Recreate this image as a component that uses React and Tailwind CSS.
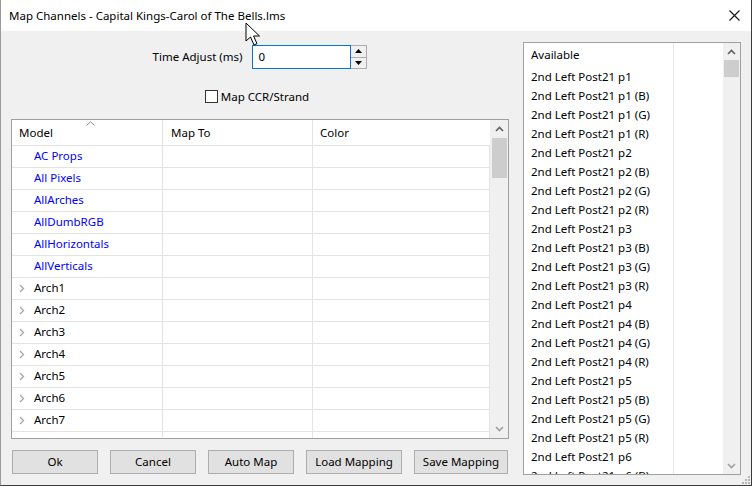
import React from "react";

const F = { fontFamily: '"Noto Sans", "Liberation Sans", sans-serif' };

const blueRows = ["AC Props", "All Pixels", "AllArches", "AllDumbRGB", "AllHorizontals", "AllVerticals"];
const archRows = ["Arch1", "Arch2", "Arch3", "Arch4", "Arch5", "Arch6", "Arch7"];

const avail = [];
for (let i = 1; i <= 6; i++) {
  avail.push(`2nd Left Post21 p${i}`);
  avail.push(`2nd Left Post21 p${i} (B)`);
  avail.push(`2nd Left Post21 p${i} (G)`);
  avail.push(`2nd Left Post21 p${i} (R)`);
}

function Chevron() {
  return (
    <svg width="6" height="9" viewBox="0 0 6 9" className="shrink-0">
      <path d="M1 1 L4.5 4.5 L1 8" fill="none" stroke="#a6a6a6" strokeWidth="1.3" />
    </svg>
  );
}

function UpArrow() {
  return (
    <svg width="9" height="6" viewBox="0 0 9 6">
      <path d="M1 5 L4.5 1.5 L8 5" fill="none" stroke="#606060" strokeWidth="1.6" />
    </svg>
  );
}
function DownArrow() {
  return (
    <svg width="9" height="6" viewBox="0 0 9 6">
      <path d="M1 1 L4.5 4.5 L8 1" fill="none" stroke="#a0a0a0" strokeWidth="1.6" />
    </svg>
  );
}

function Row({ children, blue, chevron }) {
  return (
    <div className="flex h-[22px] shrink-0 border-b border-[#e3e3e3]">
      <div className="w-[151px] border-r border-[#e3e3e3] flex items-center pl-[7px] pb-[2px]">
        <div className="w-[15px] flex items-center pt-[1px]">{chevron ? <Chevron /> : null}</div>
        <span className={blue ? "text-[#0000ff]" : "text-black"}>{children}</span>
      </div>
      <div className="w-[150px] border-r border-[#e3e3e3]" />
      <div className="w-[177px] border-r border-[#e3e3e3]" />
    </div>
  );
}

export default function App() {
  return (
    <div
      className="relative w-[752px] h-[486px] overflow-hidden bg-[#f0f0f0] border-l border-l-[#9a9a9a] border-r border-r-[#3c3c3c] border-b border-b-[#3c3c3c] text-[11.5px] text-black flex flex-col"
      style={F}
    >
      {/* Title bar */}
      <div className="h-[31px] shrink-0 bg-white flex items-center justify-between pl-[8px] pr-[11px]">
        <span className="leading-none">Map Channels - Capital Kings-Carol of The Bells.lms</span>
        <svg width="11" height="11" viewBox="0 0 11 11">
          <path d="M0.5 0.5 L10.5 10.5 M10.5 0.5 L0.5 10.5" stroke="#111" strokeWidth="1.1" />
        </svg>
      </div>

      {/* Body */}
      <div className="flex-1 flex pl-[10px]">
        {/* Left column */}
        <div className="w-[498px] flex flex-col">
          <div className="mt-[14px] h-[24px] flex items-center justify-center pr-0">
            <span className="mr-[10px]">Time Adjust (ms)</span>
            <div className="w-[99px] h-[24px] border border-[#0078d7] bg-white flex items-center pl-[5px]">0</div>
            <div className="w-[16px] h-[24px] border border-[#adadad] border-l-0 flex flex-col bg-[#f0f0f0]">
              <div className="flex-1 flex items-center justify-center border-b border-[#adadad]">
                <svg width="7" height="4" viewBox="0 0 7 4"><path d="M0 4 L3.5 0 L7 4Z" fill="#000" /></svg>
              </div>
              <div className="flex-1 flex items-center justify-center">
                <svg width="7" height="4" viewBox="0 0 7 4"><path d="M0 0 L3.5 4 L7 0Z" fill="#000" /></svg>
              </div>
            </div>
          </div>

          <div className="mt-[21px] h-[13px] flex items-center justify-center pr-[6px]">
            <div className="w-[13px] h-[13px] border border-[#333] bg-white mr-[3px]" />
            <span>Map CCR/Strand</span>
          </div>

          {/* Grid */}
          <div className="mt-[16px] h-[320px] border border-[#a0a0a0] bg-white flex overflow-hidden">
            <div className="w-[478px] flex flex-col overflow-hidden">
              <div className="relative h-[26px] shrink-0 flex border-b border-[#e3e3e3]">
                <div className="w-[151px] border-r border-[#e3e3e3] flex items-center pl-[7px]">Model</div>
                <div className="w-[150px] border-r border-[#e3e3e3] flex items-center pl-[8px]">Map To</div>
                <div className="w-[177px] flex items-center pl-[7px]">Color</div>
                <svg className="absolute left-[74px] top-[1px]" width="9" height="5" viewBox="0 0 9 5">
                  <path d="M0.5 4.5 L4.5 0.8 L8.5 4.5" fill="none" stroke="#8a8a8a" strokeWidth="1" />
                </svg>
              </div>
              {blueRows.map((r) => (
                <Row key={r} blue>
                  {r}
                </Row>
              ))}
              {archRows.map((r) => (
                <Row key={r} chevron>
                  {r}
                </Row>
              ))}
              <Row />
            </div>
            {/* scrollbar */}
            <div className="w-[18px] bg-[#f0f0f0] flex flex-col items-center pl-[1px]">
              <div className="h-[18px] flex items-center justify-center">
                <UpArrow />
              </div>
              <div className="w-[15px] h-[40px] bg-[#cdcdcd]" />
              <div className="flex-1" />
              <div className="h-[18px] flex items-center justify-center">
                <DownArrow />
              </div>
            </div>
          </div>

          {/* Buttons */}
          <div className="mt-[11px] flex gap-[12px] pl-[1px]">
            {[
              ["Ok", "w-[86px]"],
              ["Cancel", "w-[86px]"],
              ["Auto Map", "w-[86px]"],
              ["Load Mapping", "w-[96px]"],
              ["Save Mapping", "w-[94px]"],
            ].map(([t, w]) => (
              <div
                key={t}
                className={`${w} h-[24px] bg-[#e1e1e1] border border-[#adadad] flex items-center justify-center`}
              >
                {t}
              </div>
            ))}
          </div>
        </div>

        {/* Right list */}
        <div className="ml-[14px] mt-[11px] w-[218px] h-[433px] border border-[#a0a0a0] bg-white flex overflow-hidden">
          <div className="w-[150px] border-r border-[#e3eaf2] flex flex-col overflow-hidden">
            <div className="h-[24px] shrink-0 flex items-center pl-[7px]">Available</div>
            {avail.map((a) => (
              <div key={a} className="h-[19px] shrink-0 flex items-center pl-[7px]">
                {a}
              </div>
            ))}
          </div>
          <div className="flex-1" />
          <div className="w-[17px] bg-[#f0f0f0] flex flex-col items-center">
            <div className="h-[17px] flex items-center justify-center">
              <UpArrow />
            </div>
            <div className="w-[15px] h-[17px] bg-[#cdcdcd]" />
            <div className="flex-1" />
            <div className="h-[17px] flex items-center justify-center">
              <DownArrow />
            </div>
          </div>
        </div>
      </div>

      {/* resize grip */}
      <svg className="absolute right-[1px] bottom-[1px]" width="10" height="10" viewBox="0 0 10 10">
        {[[8, 0], [8, 3], [8, 6], [5, 3], [5, 6], [2, 6]].map(([x, y], i) => (
          <rect key={i} x={x} y={y + 2} width="2" height="2" fill="#b8b8b8" />
        ))}
      </svg>

      {/* mouse cursor */}
      <svg className="absolute left-[244px] top-[22px]" width="18" height="26" viewBox="0 0 18 26">
        <path
          d="M1 1 L1 19 L5.5 15 L9 23 L12 21.7 L8.6 14 L14.5 14 Z"
          fill="#fff"
          stroke="#000"
          strokeWidth="1"
          strokeLinejoin="miter"
        />
      </svg>
    </div>
  );
}
